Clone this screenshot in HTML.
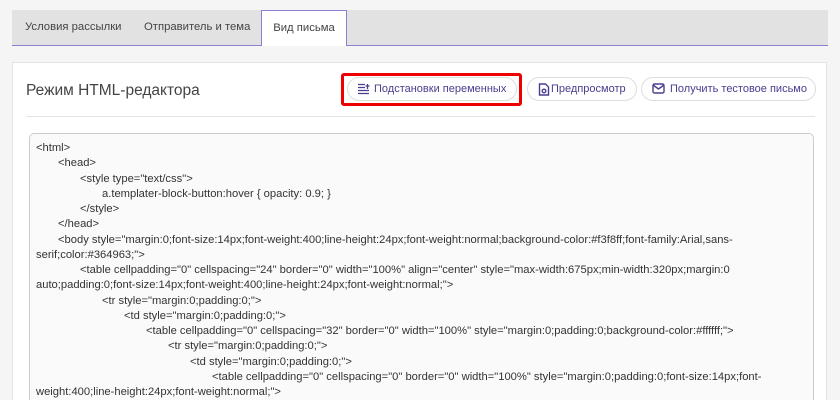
<!DOCTYPE html>
<html style="overflow:hidden"><head><meta charset="utf-8"><style>
html,body{margin:0;width:840px;height:400px;overflow:hidden}
body{background:#f5f5f5;font-family:"Liberation Sans",sans-serif;position:relative}
.tabs{position:absolute;left:12px;top:10px;width:816px;height:35px;background:#e2e2e2;border-bottom:1px solid #8f7fd0}
.tab{position:absolute;top:0;height:35px;line-height:35px;font-size:11.3px;color:#444;white-space:nowrap}
.act{background:#fff;border:1px solid #8f7fd0;border-bottom:none;height:36px;box-sizing:border-box;text-align:center}
.card{position:absolute;left:12px;top:62px;width:815px;height:338px;background:#fff;border:1px solid #e3e3e3;border-bottom:none;box-sizing:border-box;overflow:hidden}
.title{position:absolute;left:13px;top:19px;font-size:15.5px;color:#444;white-space:nowrap}
.sep{position:absolute;left:13px;top:53px;width:789px;height:1px;background:#e3e3e3}
.btn{position:absolute;top:14px;height:24px;border:1px solid #ddd;border-radius:13px;box-sizing:border-box;font-size:11px;color:#4a3d8f;line-height:22px;white-space:nowrap}
.btn svg{position:absolute;left:10px;top:5px}
.red{position:absolute;left:328px;top:10px;width:181px;height:33px;border:3px solid #e00;border-radius:3px;box-sizing:border-box}
.code{position:absolute;left:16px;top:70px;width:785px;height:268px;background:#fafafa;border:1px solid #ccc;border-bottom:none;border-radius:5px 5px 0 0;box-sizing:border-box}
.l{position:absolute;font-size:11.2px;line-height:13px;color:#333;white-space:nowrap}
</style></head><body>
<div class="tabs">
<div class="tab" style="left:13px">Условия рассылки</div>
<div class="tab" style="left:132px">Отправитель и тема</div>
<div class="tab act" style="left:249px;width:86px">Вид письма</div>
</div>
<div class="card">
<div class="title">Режим HTML-редактора</div>
<div class="btn" style="left:334px;width:170px"><svg width="12" height="12" viewBox="0 0 12 12" fill="none" stroke="#4a3d8f" stroke-width="1.3"><path d="M0 1.5h7M0 4.5h7M0 7.5h11M0 10.5h11M9.5 1v5M7.5 3h4"/></svg><span style="position:absolute;left:26px">Подстановки переменных</span></div>
<div class="red"></div>
<div class="btn" style="left:514px;width:110px"><svg width="12" height="13" viewBox="0 0 12 13" fill="none" stroke="#4a3d8f" stroke-width="1.4"><path d="M1.5 1h6l3 3v8h-9z"/><circle cx="6" cy="8" r="1.8"/></svg><span style="position:absolute;left:23px">Предпросмотр</span></div>
<div class="btn" style="left:628px;width:175px"><svg width="13" height="11" viewBox="0 0 13 11" fill="none" stroke="#4a3d8f" stroke-width="1.4"><rect x="1" y="1" width="11" height="9" rx="1.5"/><path d="M1 2l5.5 4 5.5-4"/></svg><span style="position:absolute;left:28px">Получить тестовое письмо</span></div>
<div class="sep"></div>
<div class="code"></div>
</div>
<div class="l" style="left:36px;top:142px">&lt;html&gt;</div>
<div class="l" style="left:58px;top:157px">&lt;head&gt;</div>
<div class="l" style="left:80px;top:173px">&lt;style type="text/css"&gt;</div>
<div class="l" style="left:102px;top:188px">a.templater-block-button:hover { opacity: 0.9; }</div>
<div class="l" style="left:80px;top:203px">&lt;/style&gt;</div>
<div class="l" style="left:58px;top:218px">&lt;/head&gt;</div>
<div class="l" style="left:58px;top:234px">&lt;body style="margin:0;font-size:14px;font-weight:400;line-height:24px;font-weight:normal;background-color:#f3f8ff;font-family:Arial,sans-</div>
<div class="l" style="left:36px;top:249px">serif;color:#364963;"&gt;</div>
<div class="l" style="left:80px;top:264px">&lt;table cellpadding="0" cellspacing="24" border="0" width="100%" align="center" style="max-width:675px;min-width:320px;margin:0</div>
<div class="l" style="left:36px;top:279px">auto;padding:0;font-size:14px;font-weight:400;line-height:24px;font-weight:normal;"&gt;</div>
<div class="l" style="left:102px;top:295px">&lt;tr style="margin:0;padding:0;"&gt;</div>
<div class="l" style="left:124px;top:310px">&lt;td style="margin:0;padding:0;"&gt;</div>
<div class="l" style="left:146px;top:325px">&lt;table cellpadding="0" cellspacing="32" border="0" width="100%" style="margin:0;padding:0;background-color:#ffffff;"&gt;</div>
<div class="l" style="left:168px;top:340px">&lt;tr style="margin:0;padding:0;"&gt;</div>
<div class="l" style="left:190px;top:356px">&lt;td style="margin:0;padding:0;"&gt;</div>
<div class="l" style="left:212px;top:371px">&lt;table cellpadding="0" cellspacing="0" border="0" width="100%" style="margin:0;padding:0;font-size:14px;font-</div>
<div class="l" style="left:36px;top:386px">weight:400;line-height:24px;font-weight:normal;"&gt;</div>
</body></html>
